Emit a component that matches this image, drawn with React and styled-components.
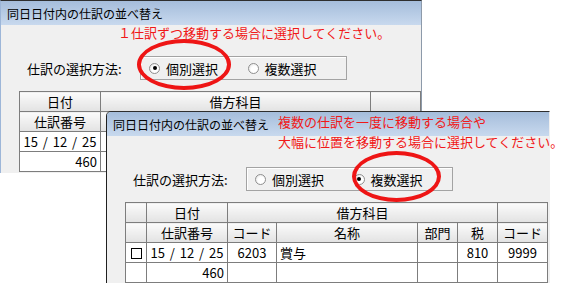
import React from 'react';
import styled, { createGlobalStyle } from 'styled-components';

const GlobalStyle = createGlobalStyle`
  html, body {
    margin: 0;
    padding: 0;
    background: #ffffff;
  }
  body {
    font-family: "Noto Sans CJK JP", "Noto Sans", sans-serif;
    color: #000;
  }
`;

const Stage = styled.div`
  position: relative;
  width: 565px;
  height: 283px;
  overflow: hidden;
  background: #ffffff;
`;

// windows lie on a free canvas, overlapping each other
const Window = styled.div`
  position: absolute;
  left: ${p => p.$x}px;
  top: ${p => p.$y}px;
  width: ${p => p.$w}px;
  height: ${p => p.$h}px;
  box-sizing: border-box;
  display: flex;
  flex-direction: column;
  background: #f0f0f0;
  border-top: 1px solid #2e2e2e;
  border-left: 1px solid ${p => (p.$front ? '#202020' : '#9db6d8')};
  border-right: 1px solid ${p => (p.$front ? 'transparent' : '#8d9aaa')};
  border-top-left-radius: ${p => (p.$front ? 5 : 0)}px;
  overflow: hidden;
`;

const TitleBar = styled.div`
  flex: none;
  height: 24px;
  display: flex;
  align-items: center;
  padding-left: 6px;
  background: linear-gradient(#a5bddb, #c8d9ee);
  font-size: 12px;
  white-space: nowrap;
`;

const Body = styled.div`
  display: flex;
  flex-direction: column;
  padding: 31px 0 0 18px;
`;

const MethodRow = styled.div`
  display: flex;
  align-items: center;
  height: 24px;
`;

const MethodLabel = styled.div`
  width: 113px;
  margin-left: 8px;
  font-size: 13px;
  white-space: nowrap;
`;

const GroupBox = styled.div`
  box-sizing: border-box;
  width: 207px;
  height: 24px;
  display: flex;
  align-items: center;
  padding-left: 8px;
  border: 1px solid #a3a3a3;
  box-shadow: inset 1px 1px 0 #ffffff;
`;

const Option = styled.div`
  width: 104px;
  display: flex;
  align-items: center;
  gap: 6px;
  font-size: 13px;
  white-space: nowrap;
`;

const Radio = styled.span`
  position: relative;
  box-sizing: border-box;
  width: 11px;
  height: 11px;
  border-radius: 50%;
  border: 1px solid #8f8f8f;
  background: radial-gradient(circle at 60% 60%, #ffffff 40%, #dcdcdc);
  &::after {
    content: '';
    display: ${p => (p.$on ? 'block' : 'none')};
    position: absolute;
    left: 2.5px;
    top: 2.5px;
    width: 4px;
    height: 4px;
    border-radius: 50%;
    background: #000;
  }
`;

const Grid = styled.table`
  width: ${p => p.$w}px;
  margin-top: 11px;
  border-collapse: collapse;
  table-layout: fixed;
  font-size: 13px;
  background: #ffffff;
`;

const Col = styled.col`
  width: ${p => p.$w}px;
`;

const Cell = styled.td`
  height: 19px;
  padding: 0 3px;
  border: 1px solid #7d7d7d;
  line-height: 19px;
  white-space: nowrap;
  overflow: hidden;
  text-align: ${p => p.$align || 'center'};
  word-spacing: ${p => (p.$wide ? 2 : 0)}px;
  background: #ffffff;
`;

const Head = styled(Cell)`
  background: linear-gradient(#fbfbfb, #e2e2e2);
`;

const CheckBox = styled.span`
  display: inline-block;
  box-sizing: border-box;
  width: 11px;
  height: 11px;
  border: 1px solid #000;
  background: #fff;
  vertical-align: -1px;
`;

const Note = styled.div`
  position: absolute;
  left: ${p => p.$x}px;
  top: ${p => p.$y}px;
  color: #f01818;
  font-size: 13px;
  line-height: 20px;
  white-space: nowrap;
`;

const Ring = styled.div`
  position: absolute;
  left: ${p => p.$x}px;
  top: ${p => p.$y}px;
  width: ${p => p.$w}px;
  height: ${p => p.$h}px;
  box-sizing: border-box;
  border: 4px solid #ee1515;
  border-radius: 50%;
`;

const TITLE = '同日日付内の仕訳の並べ替え';

const Method = ({ checked }) => (
  <MethodRow>
    <MethodLabel>仕訳の選択方法:</MethodLabel>
    <GroupBox>
      <Option>
        <Radio $on={checked === 0} />
        個別選択
      </Option>
      <Option>
        <Radio $on={checked === 1} />
        複数選択
      </Option>
    </GroupBox>
  </MethodRow>
);

const DETAIL_COLS = [81, 49, 141, 40, 40, 50];

const SlipTable = ({ withCheck }) => {
  const cols = withCheck ? [21, ...DETAIL_COLS] : DETAIL_COLS;
  const total = cols.reduce((a, b) => a + b, 0);
  return (
    <Grid $w={total}>
      <colgroup>
        {cols.map((w, i) => (
          <Col key={i} $w={w} />
        ))}
      </colgroup>
      <tbody>
        <tr>
          {withCheck && <Head />}
          <Head>日付</Head>
          <Head colSpan={4}>借方科目</Head>
          <Head />
        </tr>
        <tr>
          {withCheck && <Head />}
          <Head>仕訳番号</Head>
          <Head>コード</Head>
          <Head>名称</Head>
          <Head>部門</Head>
          <Head>税</Head>
          <Head>コード</Head>
        </tr>
        <tr>
          {withCheck && (
            <Cell>
              <CheckBox />
            </Cell>
          )}
          <Cell $wide>15 / 12 / 25</Cell>
          <Cell>{withCheck ? '6203' : ''}</Cell>
          <Cell $align="left">{withCheck ? '賞与' : ''}</Cell>
          <Cell />
          <Cell>{withCheck ? '810' : ''}</Cell>
          <Cell>{withCheck ? '9999' : ''}</Cell>
        </tr>
        <tr>
          {withCheck && <Cell />}
          <Cell $align="right">460</Cell>
          <Cell />
          <Cell />
          <Cell />
          <Cell />
          <Cell />
        </tr>
      </tbody>
    </Grid>
  );
};

export default function App() {
  return (
    <Stage>
      <GlobalStyle />

      <Window $x={0} $y={0} $w={422} $h={173}>
        <TitleBar>{TITLE}</TitleBar>
        <Body>
          <Method checked={0} />
          <SlipTable />
        </Body>
      </Window>
      <Note $x={118} $y={23}>１仕訳ずつ移動する場合に選択してください。</Note>
      <Ring $x={137} $y={39} $w={94} $h={51} />

      <Window $x={106} $y={111} $w={444} $h={180} $front>
        <TitleBar>{TITLE}</TitleBar>
        <Body>
          <Method checked={1} />
          <SlipTable withCheck />
        </Body>
      </Window>
      <Note $x={278} $y={112}>
        複数の仕訳を一度に移動する場合や
        <br />
        大幅に位置を移動する場合に選択してください。
      </Note>
      <Ring $x={352} $y={151} $w={89} $h={51} />
    </Stage>
  );
}
